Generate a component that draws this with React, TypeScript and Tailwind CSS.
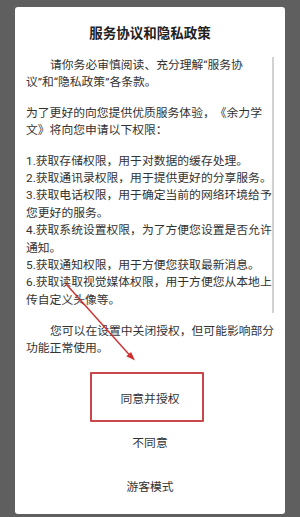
import React from 'react';

const font = { fontFamily: 'Roboto, "Noto Sans CJK SC", sans-serif' };

const introLines = ['请你务必审慎阅读、充分理解“服务协', '议”和“隐私政策”各条款。'];
const offerLines = ['为了更好的向您提供优质服务体验，《余力学', '文》将向您申请以下权限：'];
const permissionLines = [
  '1.获取存储权限，用于对数据的缓存处理。',
  '2.获取通讯录权限，用于提供更好的分享服务。',
  '3.获取电话权限，用于确定当前的网络环境给予',
  '您更好的服务。',
  '4.获取系统设置权限，为了方便您设置是否允许',
  '通知。',
  '5.获取通知权限，用于方便您获取最新消息。',
  '6.获取读取视觉媒体权限，用于方便您从本地上',
  '传自定义头像等。',
];

const Lines = ({ lines, indent }: { lines: string[]; indent?: boolean }) => (
  <div>
    {lines.map((line, idx) => (
      <div key={idx} className={`whitespace-nowrap ${indent && idx === 0 ? 'pl-[24px]' : ''}`}>
        {line}
      </div>
    ))}
  </div>
);

export default function App() {
  return (
    <div
      className="relative w-[300px] h-[517px] bg-[#5f5f5f] pt-[7px] overflow-hidden [text-spacing-trim:space-all]"
      style={font}
    >
      <div className="relative ml-[15px] w-[270px] h-[507px] bg-white rounded-[3px] flex flex-col">
        {/* Title */}
        <h2 className="pt-[16px] text-center text-[13.5px] leading-[20px] font-bold text-[#222]">
          服务协议和隐私政策
        </h2>

        {/* Scrollable terms */}
        <div className="mt-[14px] ml-[11px] w-[248px] h-[256px] flex">
          <div className="flex-1 text-[11.8px] leading-[17.4px] text-[#333] flex flex-col gap-[13px]">
            <Lines lines={introLines} indent />
            <Lines lines={offerLines} />
            <Lines lines={permissionLines} />
          </div>
          <div className="w-[2px] h-full bg-[#d2d2d2]" />
        </div>

        <div className="mt-[10px] ml-[11px] text-[11.8px] leading-[17px] text-[#333]">
          <Lines lines={['您可以在设置中关闭授权，但可能影响部分', '功能正常使用。']} indent />
        </div>

        {/* Actions */}
        <div className="mt-[21px] flex flex-col text-[11.8px] text-[#333]">
          <button className="h-[44px] flex items-center justify-center">同意并授权</button>
          <button className="h-[44px] flex items-center justify-center">不同意</button>
          <button className="h-[44px] flex items-center justify-center">游客模式</button>
        </div>

        {/* Annotation box */}
        <div className="absolute left-[75px] top-[365px] w-[114px] h-[50px] border-2 border-[#c9474a] rounded-[1px]" />
      </div>

      {/* Annotation arrow */}
      <svg className="absolute left-0 top-0 pointer-events-none" width="300" height="517" viewBox="0 0 300 517">
        <line x1="66" y1="284" x2="130" y2="355.5" stroke="#d03030" strokeWidth="1.4" />
        <polygon points="135,360.5 126.3,356.3 131.1,352" fill="#d03030" />
      </svg>
    </div>
  );
}
